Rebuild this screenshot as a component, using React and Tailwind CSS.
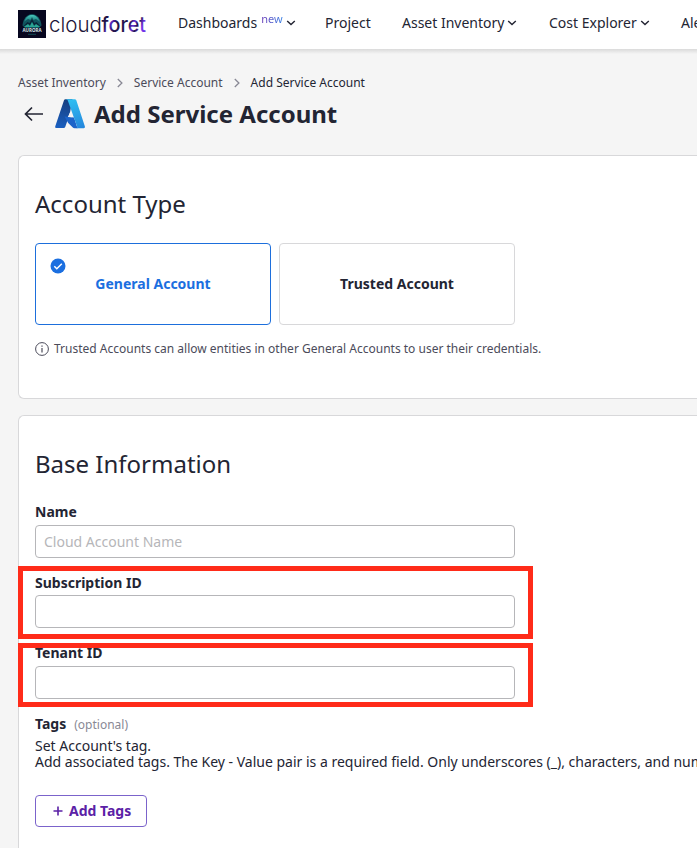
import React from 'react';

const Chevron = ({ className = '' }) => (
  <svg className={`h-[6px] w-[10px] shrink-0 ${className}`} viewBox="0 0 10 6" fill="none" stroke="#232533" strokeWidth="1.4">
    <path d="M1.2 0.9 5 4.6 8.8 0.9" />
  </svg>
);

const Crumb = () => (
  <svg className="h-[10px] w-[6px] shrink-0" viewBox="0 0 6 10" fill="none" stroke="#898995" strokeWidth="1.3">
    <path d="M0.8 1 4.9 5 0.8 9" />
  </svg>
);

const AuroraMark = () => (
  <svg className="h-7 w-7 shrink-0" viewBox="0 0 28 28">
    <defs>
      <linearGradient id="aurora" x1="0" y1="0" x2="0" y2="1">
        <stop offset="0" stopColor="#48c6bb" />
        <stop offset="1" stopColor="#126c72" />
      </linearGradient>
    </defs>
    <rect width="28" height="28" fill="#07071f" />
    <path d="M4.5 15.5C5 8.5 9 4.5 14 4c5 .5 9 4.5 9.500 11.500L21 18H7Z" fill="#10545e" />
    <path d="M6 12C8 6.500 11 5 14 5s6 1.500 8 7l-4-3-2.500 1L14 7l-1.500 3L10 9Z" fill="url(#aurora)" />
    <path d="m4.500 17 5-5 2 1L14 9l2.500 4 2-1 5 5-5-2.500-2 1.500L14 12l-2.500 4-2-1.500Z" fill="#08263a" />
    <path d="m6 17 4-3 2 2 2-4 2 4 2-2 4 3Z" fill="#2aa594" />
    <text x="14" y="22" textAnchor="middle" textLength="19" lengthAdjust="spacingAndGlyphs" fill="#d5e6e8" className="font-['Noto_Sans',sans-serif] text-[5.5px] font-bold">AURORA</text>
    <path d="M10 24.300h8" stroke="#145c60" strokeWidth="0.8" />
  </svg>
);

const Wordmark = () => (
  <svg className="ml-[3px] h-[28px] w-[98px] shrink-0" viewBox="0 0 98 28">
    <defs>
      <linearGradient id="foret" x1="0" y1="0" x2="1" y2="0.25">
        <stop offset="0" stopColor="#1c1439" />
        <stop offset="0.2" stopColor="#24134f" />
        <stop offset="0.3" stopColor="#5f2bc8" />
        <stop offset="0.42" stopColor="#24134f" />
        <stop offset="0.7" stopColor="#24134f" />
        <stop offset="0.8" stopColor="#6a30dc" />
        <stop offset="0.88" stopColor="#24134f" />
        <stop offset="1" stopColor="#7135e8" />
      </linearGradient>
    </defs>
    <text x="0" y="21.500" textLength="53" lengthAdjust="spacingAndGlyphs" fill="#1c1439" className="font-[Inter,sans-serif] text-[20.5px] font-light">cloud</text>
    <text x="52.500" y="21.500" textLength="44.500" lengthAdjust="spacingAndGlyphs" fill="url(#foret)" className="font-[Inter,sans-serif] text-[20.5px] font-medium">foret</text>
  </svg>
);

const AzureMark = () => (
  <svg className="ml-[9px] h-[36px] w-[36px] shrink-0" viewBox="0 0 36 36">
    <defs>
      <linearGradient id="az1" x1="14" y1="4" x2="8" y2="32" gradientUnits="userSpaceOnUse">
        <stop offset="0" stopColor="#173f80" />
        <stop offset="1" stopColor="#1a5fc0" />
      </linearGradient>
      <linearGradient id="az2" x1="18" y1="3" x2="27" y2="32" gradientUnits="userSpaceOnUse">
        <stop offset="0" stopColor="#2fc0f2" />
        <stop offset="1" stopColor="#2588dd" />
      </linearGradient>
    </defs>
    <path fill="url(#az1)" d="M13.300 3.200h7.200l-2.300 12.200-1.500 4.800-1.200 4.300-2.300 6.600q-.4 1-1.500 1H4.300q-1.500 0-1.100-1.500L12 4.300q.4-1.100 1.300-1.100Z" />
    <path fill="#1c63c9" d="M12.500 20.500 22 21.500 25.500 32.200h-3q-1 0-1.700-.7l-4.600-4.500Z" />
    <path fill="url(#az2)" d="M13.300 3.200h9.400q1.200 0 1.600 1.100l8.600 26.200q.4 1.700-1.200 1.700h-7.200q1-.4.6-1.700L15.700 4.300q-.5-1.100-2.400-1.100Z" />
    <path fill="#f5f5f5" d="m18.300 16 2 5.300-4.500-.4Z" />
  </svg>
);

const inputClass = 'block h-[33px] w-[480px] rounded-[4px] border border-[#b6b6b9] bg-white px-2 text-[14px] outline-none placeholder:text-[#b6b6b9]';

export default function App() {
  return (
    <div className="h-[848px] w-full overflow-hidden bg-[#f5f5f5] font-['Noto_Sans',sans-serif] text-[14px] text-[#232533]">
      <header className="flex h-[49px] items-center overflow-hidden whitespace-nowrap bg-white pl-[18px] pb-px">
        <AuroraMark />
        <Wordmark />
        <nav className="mb-[2px] ml-[31px] flex w-[600px] shrink-0 items-center leading-5">
          <a className="flex w-[147px] shrink-0 items-center">
            Dashboards
            <span className="-mt-[9px] ml-1 bg-gradient-to-r from-[#6638b6] to-[#3182e5] bg-clip-text text-[11px] leading-4 text-transparent">new</span>
            <Chevron className="ml-[3px]" />
          </a>
          <a className="w-[77px] shrink-0">Project</a>
          <a className="flex w-[147px] shrink-0 items-center">Asset Inventory<Chevron className="ml-[3px]" /></a>
          <a className="flex w-[132px] shrink-0 items-center">Cost Explorer<Chevron className="ml-[3px]" /></a>
          <a className="shrink-0">Alert Manager</a>
        </nav>
      </header>
      <div className="h-[5px] bg-gradient-to-b from-[#dadada] to-[#f5f5f5]" />

      <div className="mt-[20px] flex h-[18px] items-center gap-[11px] whitespace-nowrap pl-[18px] text-[12px] text-[#4b4b5a]">
        <span>Asset Inventory</span>
        <Crumb />
        <span>Service Account</span>
        <Crumb />
        <span className="text-[#232533]">Add Service Account</span>
      </div>

      <div className="mt-[4px] flex h-9 items-center pl-6">
        <svg className="h-[16px] w-[19px] shrink-0" viewBox="0 0 19 16" fill="none" stroke="#232533" strokeWidth="1.700">
          <path d="M19 8H1.500M8 1.500 1.500 8 8 14.500" />
        </svg>
        <AzureMark />
        <h1 className="ml-[6px] whitespace-nowrap text-[24px] font-bold leading-8">Add Service Account</h1>
      </div>

      <section className="ml-[18px] mt-[23px] h-[244px] rounded-l-[6px] border border-r-0 border-[#d8d8da] bg-white pl-4 pt-8">
        <h2 className="text-[24px] leading-8">Account Type</h2>
        <div className="mt-[23px] flex gap-2">
          <button className="relative h-[82px] w-[236px] rounded-[4px] border border-[#1d6fdc] pb-[2px] font-bold text-[#1b6fe0]">
            <svg className="absolute left-[14px] top-[14px] h-4 w-4" viewBox="0 0 16 16">
              <circle cx="8" cy="8" r="7.500" fill="#1b6fe0" />
              <path d="m4.300 8.200 2.500 2.500 5-5" fill="none" stroke="white" strokeWidth="1.500" />
            </svg>
            General Account
          </button>
          <button className="h-[82px] w-[236px] rounded-[4px] border border-[#d8d8da] pb-[2px] font-bold">Trusted Account</button>
        </div>
        <p className="mt-[15px] flex items-center gap-[5px] text-[12px] leading-[18px] text-[#4b4b5a]">
          <svg className="-mt-px h-[14px] w-[14px]" viewBox="0 0 14 14" fill="none" stroke="#4b4b5a">
            <circle cx="7" cy="7" r="6.400" />
            <path d="M7 6v4.500M7 3.500v1.300" strokeWidth="1.200" />
          </svg>
          Trusted Accounts can allow entities in other General Accounts to user their credentials.
        </p>
      </section>

      <section className="relative ml-[18px] mt-4 h-[460px] rounded-l-[6px] border border-r-0 border-[#d8d8da] bg-white pl-4 pt-8">
        <h2 className="text-[24px] leading-8">Base Information</h2>
        <label className="mt-[22px] block h-[23px] font-bold leading-5">Name</label>
        <input className={inputClass} placeholder="Cloud Account Name" />
        <label className="mt-[15px] block h-[22px] font-bold leading-5">Subscription ID</label>
        <input className={inputClass} />
        <label className="mt-[15px] block h-[23px] font-bold leading-5">Tenant ID</label>
        <input className={inputClass} />
        <div className="mt-[15px] flex h-5 items-center gap-[8px] leading-5">
          <span className="font-bold">Tags</span>
          <span className="pt-px text-[12px] text-[#898995]">(optional)</span>
        </div>
        <p className="mt-[4px] w-[900px] leading-4">
          Set Account's tag.<br />
          Add associated tags. The Key - Value pair is a required field. Only underscores (_), characters, and numbers are allowed.
        </p>
        <button className="mt-[25px] flex h-8 w-[112px] items-center rounded-[4px] border border-[#7b63cb] pb-[2px] pl-[17px] font-bold text-[#5b21a6]">
          <svg className="mr-[6px] mt-px h-[10px] w-[10px]" viewBox="0 0 10 10" fill="none" stroke="#5b21a6" strokeWidth="1.600">
            <path d="M5 .5v9M.5 5h9" />
          </svg>
          Add Tags
        </button>
        <div className="pointer-events-none absolute -left-px top-[150px] h-[73px] w-[515px] border-[5px] border-[#ff2b19]" />
        <div className="pointer-events-none absolute -left-px top-[227px] h-[64px] w-[515px] border-[5px] border-[#ff2b19]" />
      </section>
    </div>
  );
}
